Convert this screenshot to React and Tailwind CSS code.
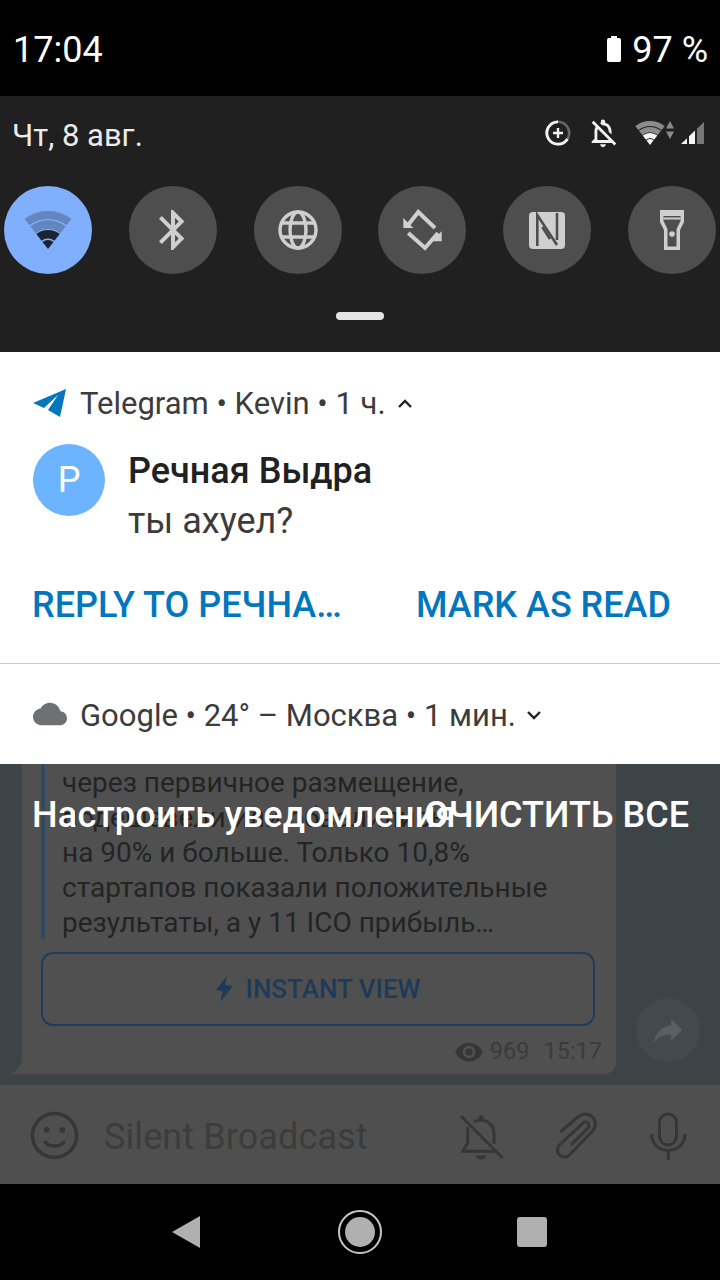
// one band of the wifi fan, apex at 0,0
function band(r1, r2) {
  const s = 0.616;
  const c = 0.788;
  return `M${-r2 * s} ${-r2 * c}A${r2} ${r2} 0 0 1 ${r2 * s} ${-r2 * c}L${r1 * s} ${-r1 * c}A${r1} ${r1} 0 0 0 ${-r1 * s} ${-r1 * c}Z`;
}

function Wifi({ className, back, front }) {
  return (
    <svg viewBox="-24 -38 48 38" className={className}>
      <path d={band(30, 38)} fill={back} />
      <path d={band(20, 28.7)} fill={back} />
      <path d={band(10.5, 19)} fill={front} />
      <path d={band(0, 9)} fill={front} />
    </svg>
  );
}

const bellOff =
  "M12 22c1.1 0 2-.9 2-2h-4c0 1.1.9 2 2 2zm0-15.5c2.49 0 4 2.02 4 4.5v.1l2 2V11c0-3.07-1.63-5.64-4.5-6.32V4c0-.83-.67-1.5-1.5-1.5s-1.5.67-1.5 1.5v.68c-.24.06-.47.15-.69.23l1.64 1.64c.18-.02.36-.05.55-.05zM5.41 3.35L4 4.76l2.81 2.81C6.29 8.57 6 9.74 6 11v5l-2 2v1h14.24l1.74 1.74 1.41-1.41L5.41 3.35zM16 17H8v-6c0-.68.12-1.32.34-1.9L16 16.76V17z";

function Tile({ active, children }) {
  return (
    <div className={`w-[88px] h-[88px] rounded-full flex items-center justify-center ${active ? "bg-[#80b0fd]" : "bg-[#4e4e4e]"}`}>
      {children}
    </div>
  );
}

export default function App() {
  return (
    <div className="w-[720px] h-[1280px] overflow-hidden flex flex-col bg-black font-['Roboto',sans-serif]">
      {/* status bar */}
      <div className="h-[96px] shrink-0 bg-black flex items-center justify-between pt-[3px] pl-[13px] pr-[12px] text-white">
        <span className="text-[36px] leading-none">17:04</span>
        <div className="flex items-center gap-[11px]">
          <div className="relative w-[14px] h-[24px] bg-white rounded-[2px]">
            <div className="absolute -top-[2px] left-[4px] w-[6px] h-[3px] bg-white" />
          </div>
          <span className="text-[36px] leading-none">97 %</span>
        </div>
      </div>

      {/* quick settings */}
      <div className="h-[256px] shrink-0 bg-[#202020] flex flex-col">
        <div className="h-[90px] shrink-0 flex items-center justify-between pb-[12px] pl-[12px] pr-[16px]">
          <span className="text-[31px] leading-none text-[#ececec]">Чт, 8 авг.</span>
          <div className="flex items-center mb-[4px]">
            <svg viewBox="0 0 26 26" className="w-[26px] h-[26px] mr-[15px]" fill="none">
              <circle cx="13" cy="13" r="11.2" stroke="#666" strokeWidth="2.6" />
              <path d="M13 1.8 A11.2 11.2 0 1 0 22.5 19" stroke="#f2f2f2" strokeWidth="2.8" />
              <path d="M13 8v10M8 13h10" stroke="#f2f2f2" strokeWidth="2.4" />
            </svg>
            <svg viewBox="0 0 24 24" className="w-[34px] h-[34px] mr-[15px]" fill="#f2f2f2">
              <path d={bellOff} />
            </svg>
            <Wifi className="w-[30px] h-[24px]" back="#8c8c8c" front="#f5f5f5" />
            <svg viewBox="0 0 8 18" className="w-[8px] h-[18px] ml-[1px] mr-[7px] -mt-[6px]">
              <path d="M4 0 L8 7.5 H0 Z M4 18 L8 10.5 H0 Z" fill="#888" />
            </svg>
            <svg viewBox="0 0 23 22" className="w-[23px] h-[22px]">
              <path d="M0 22 L6 16.3 V22 Z M8 14.3 L14 8.6 V22 H8 Z" fill="#f5f5f5" />
              <path d="M16 6.7 L23 0 V22 H16 Z" fill="#777" />
            </svg>
          </div>
        </div>
        <div className="flex justify-between px-[4px]">
          <Tile active>
            <Wifi className="w-[48px] h-[38px]" back="#6386bf" front="#1c2433" />
          </Tile>
          <Tile>
            <svg viewBox="0 0 24 24" className="w-[48px] h-[48px]" fill="#cfcfcf">
              <path d="M17.71 7.71L12 2h-1v7.59L6.41 5 5 6.41 10.59 12 5 17.59 6.41 19 11 14.41V22h1l5.71-5.71-4.3-4.29 4.3-4.29zM13 5.83l1.88 1.88L13 9.59V5.83zm1.88 10.46L13 18.17v-3.76l1.88 1.88z" />
            </svg>
          </Tile>
          <Tile>
            <svg viewBox="0 0 40 40" className="w-[40px] h-[40px]" fill="none" stroke="#cfcfcf" strokeWidth="3.4">
              <circle cx="20" cy="20" r="18" />
              <ellipse cx="20" cy="20" rx="8" ry="18" />
              <path d="M4 13h32M4 27h32" />
            </svg>
          </Tile>
          <Tile>
            <svg viewBox="0 0 45 44" className="w-[45px] h-[44px]" fill="none" stroke="#cfcfcf" strokeWidth="4">
              <path d="M8.3 16.7 L18.3 4 L35 20" />
              <path d="M8.3 25 L25 40 L38 25" />
              <path d="M3.3 10 V20 H13.3 Z" fill="#cfcfcf" stroke="none" />
              <path d="M41.7 23.3 V33.3 H31.7 Z" fill="#cfcfcf" stroke="none" />
            </svg>
          </Tile>
          <Tile>
            <svg viewBox="0 0 36 37" className="w-[36px] h-[37px]" fill="none" stroke="#4e4e4e" strokeWidth="2.6">
              <rect width="36" height="37" rx="4" fill="#cfcfcf" stroke="none" />
              <path d="M8.3 34 V3 L28 33" />
              <path d="M28 1 V28" />
              <path d="M13.3 15 L21 27" />
            </svg>
          </Tile>
          <Tile>
            <svg viewBox="0 0 24 40" className="w-[24px] h-[40px]">
              <path d="M0 0 H24 V12 L20 20 V40 H4 V20 L0 12 Z" fill="#cfcfcf" />
              <path d="M3.5 6 H20.5 V11 L16.5 19 V36.5 H7.5 V19 L3.5 11 Z" fill="#4e4e4e" />
              <path d="M3.5 8.5 H20.5" stroke="#cfcfcf" strokeWidth="2" />
              <circle cx="12" cy="24" r="2.8" fill="#cfcfcf" />
            </svg>
          </Tile>
        </div>
        <div className="flex-1 flex items-center justify-center pt-[5px]">
          <div className="w-[48px] h-[8px] rounded-full bg-[#e4e4e4]" />
        </div>
      </div>

      {/* notifications */}
      <div className="h-[412px] shrink-0 bg-white flex flex-col">
        <div className="h-[312px] shrink-0 flex flex-col border-b border-[#cccccc] px-[33px] pt-[31px]">
          <div className="flex items-center h-[40px]">
            <svg viewBox="0 0 33 28" className="w-[33px] h-[28px] mr-[14px]" fill="#0277bd">
              <path d="M33 0 L0 14 L11 19 L25 6 L15 21 L27 28 Z" />
            </svg>
            <span className="text-[31px] leading-none text-[#3c3c3c]">Telegram • Kevin • 1 ч.</span>
            <svg viewBox="0 0 14 9" className="w-[14px] h-[9px] ml-[12px]" fill="none" stroke="#222" strokeWidth="2.4">
              <path d="M1 8 L7 2 L13 8" />
            </svg>
          </div>
          <div className="flex mt-[21px]">
            <div className="w-[72px] h-[72px] rounded-full bg-[#6cb4ff] flex items-center justify-center text-white text-[36px] shrink-0">P</div>
            <div className="ml-[23px] mt-[2px]">
              <div className="text-[36px] leading-[50px] font-medium text-[#212121]">Речная Выдра</div>
              <div className="text-[36px] leading-[50px] text-[#3c3c3c]">ты ахуел?</div>
            </div>
          </div>
          <div className="flex items-center justify-between mt-[41px] pr-[16px] text-[36px] leading-none font-medium text-[#0277bd]">
            <span className="-ml-[1px]">REPLY TO РЕЧНА…</span>
            <span>MARK AS READ</span>
          </div>
        </div>
        <div className="flex-1 flex items-center pt-[2px] px-[33px]">
          <svg viewBox="0 0 24 24" className="w-[34px] h-[34px] mr-[13px] -mt-[3px]" fill="#6f7073">
            <path d="M19.35 10.04C18.67 6.59 15.64 4 12 4 9.11 4 6.6 5.64 5.35 8.04 2.34 8.36 0 10.91 0 14c0 3.31 2.69 6 6 6h13c2.76 0 5-2.24 5-5 0-2.64-2.05-4.78-4.65-4.96z" />
          </svg>
          <span className="text-[31px] leading-none text-[#3c3c3c]">Google • 24° – Москва • 1 мин.</span>
          <svg viewBox="0 0 14 9" className="w-[14px] h-[9px] ml-[11px]" fill="none" stroke="#222" strokeWidth="2.4">
            <path d="M1 1 L7 7 L13 1" />
          </svg>
        </div>
      </div>

      {/* dimmed chat */}
      <div className="relative h-[420px] shrink-0 flex flex-col justify-end overflow-hidden bg-[#3d4448]">
        <div className="flex items-end">
          <div className="relative w-[594px] ml-[22px] shrink-0 bg-[#505050] border-b border-[#424242] rounded-br-[12px] pl-[19px] pr-[21px] text-[#242424]">
            <svg viewBox="0 0 13 14" className="absolute -left-[13px] bottom-0 w-[13px] h-[14px]" fill="#505050">
              <path d="M13 0 V14 H0 Q10 12 13 0 Z" />
            </svg>
            <div className="border-l-[4px] border-[#2f4a62] pl-[17px] pt-[1px] text-[28px] leading-[35px] h-[175px] whitespace-nowrap">
              <div>через первичное размещение,</div>
              <div>подешевели или обвалились</div>
              <div>на 90% и больше. Только 10,8%</div>
              <div>стартапов показали положительные</div>
              <div>результаты, а у 11 ICO прибыль…</div>
            </div>
            <div className="mt-[13px] h-[74px] border-[2px] border-[#1f3d5a] rounded-[12px] flex items-center justify-center gap-[13px] text-[#1d3a58] text-[26px] font-medium">
              <svg viewBox="0 0 17 26" className="w-[17px] h-[26px]" fill="#1d3a58">
                <path d="M11 0 L0 14 L7 15.5 L4 26 L17 10 L9 9 Z" />
              </svg>
              <span>INSTANT VIEW</span>
            </div>
            <div className="flex items-center justify-end h-[48px] pt-[3px] -mr-[7px] text-[#3b3b3b] text-[23.5px]">
              <svg viewBox="0 0 24 24" className="w-[30px] h-[30px] mr-[6px]" fill="#363636">
                <path d="M12 4.5C7 4.5 2.73 7.61 1 12c1.73 4.39 6 7.5 11 7.5s9.27-3.11 11-7.5c-1.73-4.39-6-7.5-11-7.5zM12 17c-2.76 0-5-2.24-5-5s2.24-5 5-5 5 2.24 5 5-2.24 5-5 5zm0-8c-1.66 0-3 1.34-3 3s1.34 3 3 3 3-1.34 3-3-1.34-3-3-3z" />
              </svg>
              <span className="mr-[14px]">969</span>
              <span>15:17</span>
            </div>
          </div>
          <div className="w-[64px] h-[64px] rounded-full bg-[#434a4f] ml-[20px] mb-[13px] shrink-0 flex items-center justify-center">
            <svg viewBox="0 0 24 24" className="w-[38px] h-[38px]" fill="#5b5f62">
              <path d="M14 9V5l7 7-7 7v-4.1c-5 0-8.5 1.6-11 5.1 1-5 4-10 11-11z" />
            </svg>
          </div>
        </div>
        <div className="h-[99px] mt-[10px] shrink-0 bg-[#4f4f4f] flex items-center pt-[2px] pl-[28px] pr-[33px]">
          <svg viewBox="0 0 24 24" className="w-[53px] h-[53px]" fill="none" stroke="#363636" strokeWidth="1.6">
            <circle cx="12" cy="12" r="10" />
            <path d="M7.5 14.5 C9 17.5 15 17.5 16.5 14.5" />
            <circle cx="8.5" cy="9.5" r="1.3" fill="#363636" stroke="none" />
            <circle cx="15.5" cy="9.5" r="1.3" fill="#363636" stroke="none" />
          </svg>
          <span className="ml-[23px] mt-[2px] text-[36px] leading-none tracking-[0.1px] text-[#3c3c3c]">Silent Broadcast</span>
          <div className="ml-auto flex items-center gap-[52px]">
            <svg viewBox="0 0 45 48" className="w-[45px] h-[48px]" fill="none" stroke="#363636" strokeWidth="3">
              <path d="M2 4 L43.7 46" />
              <path d="M15 10 C17 8.8 19.5 8.3 22 8.3 C30 8.3 35 14 35 22 V32" />
              <path d="M8.7 15 V31 L3.7 39.3 H38" />
              <circle cx="22" cy="5.7" r="2.4" fill="#363636" stroke="none" />
              <path d="M17 43.5 H27 C27 46 25 47.5 22 47.5 C19 47.5 17 46 17 43.5 Z" fill="#363636" stroke="none" />
            </svg>
            <svg viewBox="0 0 42 48" className="w-[42px] h-[48px]" fill="none" stroke="#363636" strokeWidth="3">
              <path d="M4.3 20 L22 5 A10 10 0 0 1 36.5 19 L13.5 43 A7 7 0 0 1 3.5 33 L27 11 A3.5 3.5 0 0 1 32 16 L15 33" />
            </svg>
            <svg viewBox="0 0 37 48" className="w-[37px] h-[48px]" fill="none" stroke="#363636" strokeWidth="3">
              <rect x="9.5" y="2" width="17" height="31" rx="8.5" />
              <path d="M1.7 22 C1.7 32 9 38.5 18.3 38.5 C27.5 38.5 35 32 35 22" />
              <path d="M18.3 38.5 V47.7" />
            </svg>
          </div>
        </div>
        <div className="absolute top-[33px] left-[32px] right-[35px] flex justify-between text-[36px] leading-none font-medium text-white">
          <span className="whitespace-nowrap w-[392px] tracking-[0.3px]">Настроить уведомления</span>
          <span className="whitespace-nowrap">ОЧИСТИТЬ ВСЕ</span>
        </div>
      </div>

      {/* nav bar */}
      <div className="h-[96px] shrink-0 bg-black flex items-center pl-[172px]">
        <svg viewBox="0 0 28 32" className="w-[28px] h-[32px] mr-[138px]">
          <path d="M28 0 V32 L0 16 Z" fill="#b0b0b0" />
        </svg>
        <div className="w-[44px] h-[44px] rounded-full border-[2px] border-[#c8c8c8] flex items-center justify-center mr-[135px]">
          <div className="w-[30px] h-[30px] rounded-full bg-[#b0b0b0]" />
        </div>
        <div className="w-[30px] h-[30px] rounded-[3px] bg-[#b0b0b0]" />
      </div>
    </div>
  );
}
